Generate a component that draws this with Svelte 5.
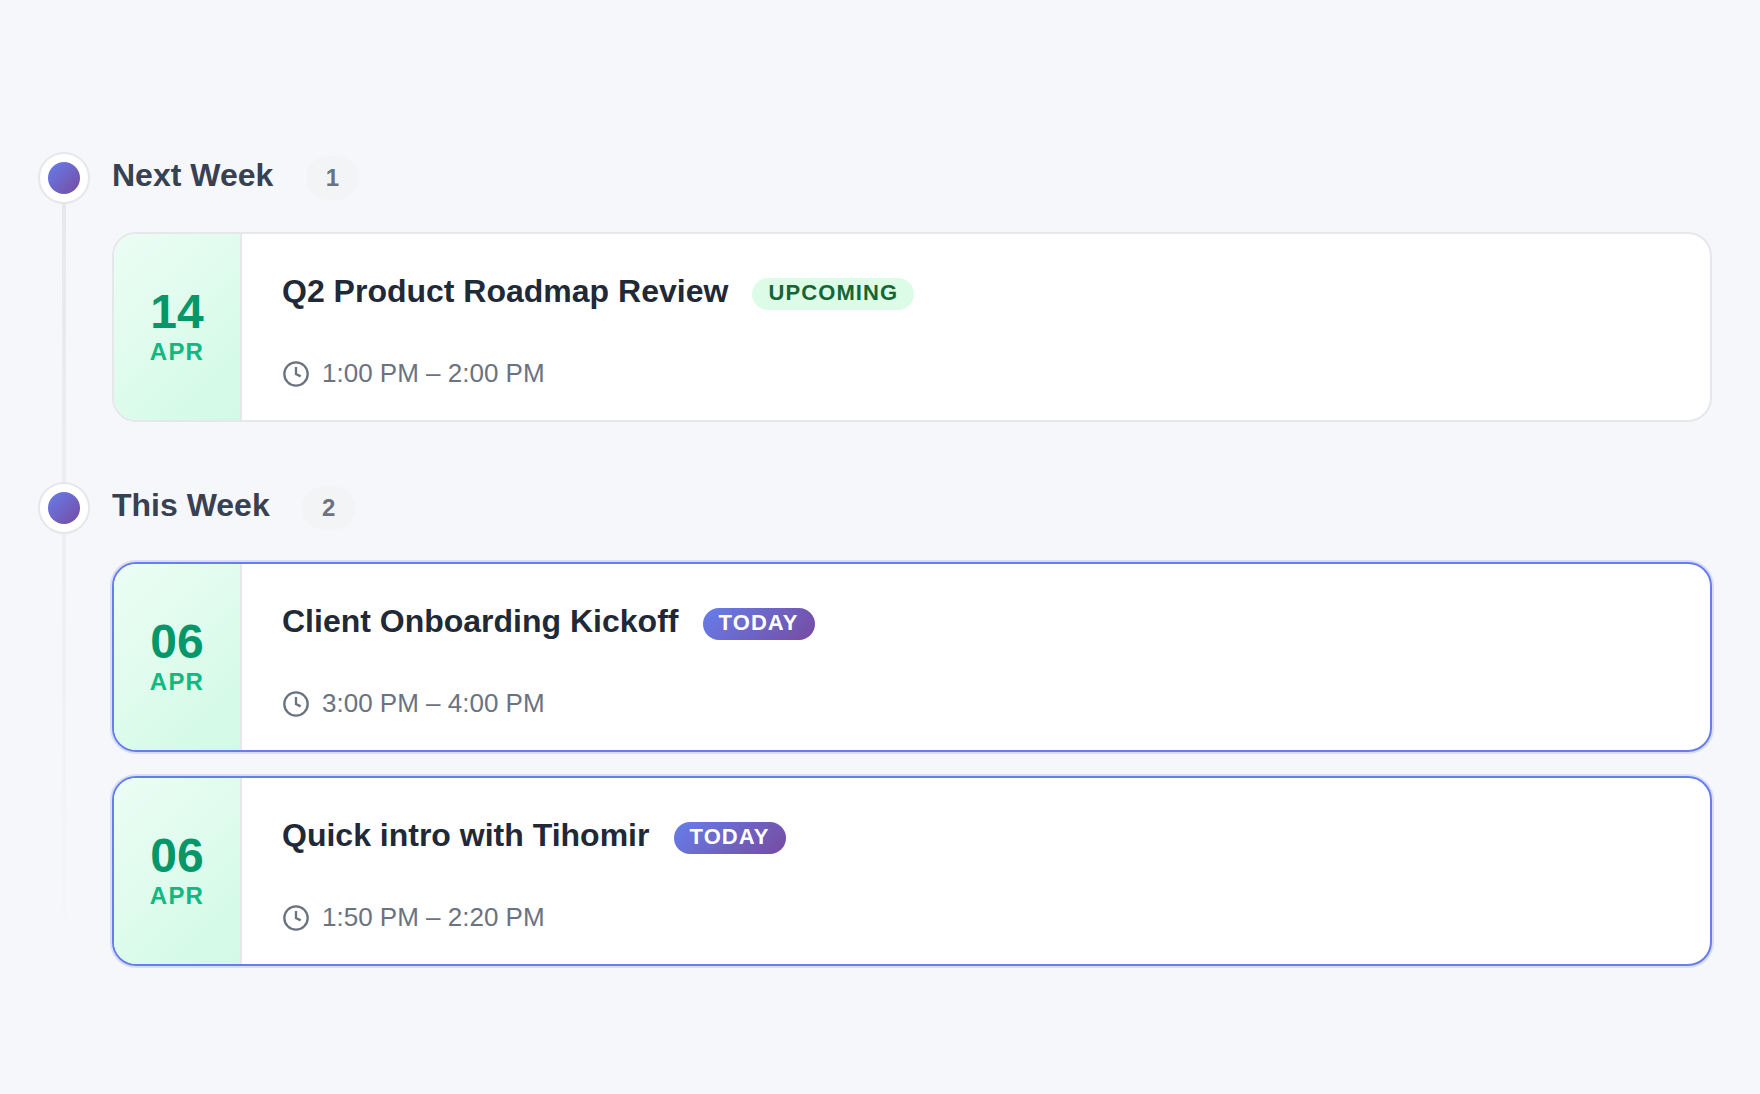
<script>
  const groups = [
    {
      label: "Next Week",
      events: [
        {
          day: "14",
          month: "Apr",
          title: "Q2 Product Roadmap Review",
          time: "1:00 PM – 2:00 PM",
          today: false
        }
      ]
    },
    {
      label: "This Week",
      events: [
        {
          day: "06",
          month: "Apr",
          title: "Client Onboarding Kickoff",
          time: "3:00 PM – 4:00 PM",
          today: true
        },
        {
          day: "06",
          month: "Apr",
          title: "Quick intro with Tihomir",
          time: "1:50 PM – 2:20 PM",
          today: true
        }
      ]
    }
  ];
</script>

<main class="timeline">
  {#each groups as group}
    <section class="group">
      <header class="group-header">
        <span class="marker"></span>
        <h2>{group.label}</h2>
        <span class="count">{group.events.length}</span>
      </header>
      <div class="events">
        {#each group.events as event}
          <article class="card" class:today={event.today}>
            <div class="date">
              <span class="day">{event.day}</span>
              <span class="month">{event.month}</span>
            </div>
            <div class="content">
              <div class="title-row">
                <h3>{event.title}</h3>
                <span class="status">{event.today ? "Today" : "Upcoming"}</span>
              </div>
              <div class="time">
                <svg width="28" height="28" viewBox="0 0 24 24" fill="none" stroke="currentColor" stroke-width="2">
                  <circle cx="12" cy="12" r="10" />
                  <polyline points="12 6 12 12 16 14" />
                </svg>
                <span>{event.time}</span>
              </div>
            </div>
          </article>
        {/each}
      </div>
    </section>
  {/each}
</main>

<style>
  :global(body) {
    margin: 0;
    background: #f5f7fb;
    font-family: "Liberation Sans", Arial, sans-serif;
  }

  .timeline {
    position: relative;
    box-sizing: border-box;
    min-height: 1094px;
    padding: 152px 48px 0 38px;
  }

  /* vertical rail behind the markers */
  .timeline::before {
    content: "";
    position: absolute;
    left: 62px;
    top: 160px;
    width: 4px;
    height: 806px;
    background: linear-gradient(to bottom, #e5e7eb 0%, transparent 100%);
  }

  .group {
    position: relative;
    margin-bottom: 60px;
  }

  .group-header {
    display: flex;
    align-items: center;
    height: 52px;
    margin-bottom: 28px;
  }

  .marker {
    box-sizing: border-box;
    width: 52px;
    height: 52px;
    margin-right: 22px;
    border: 2px solid #e5e7eb;
    border-radius: 50%;
    background: #fff;
    display: flex;
    align-items: center;
    justify-content: center;
  }

  .marker::after {
    content: "";
    width: 32px;
    height: 32px;
    border-radius: 50%;
    background: linear-gradient(135deg, #667eea 0%, #764ba2 100%);
  }

  h2 {
    margin: 0 32.4px 5px 0;
    font-size: 32px;
    font-weight: 700;
    line-height: 37px;
    color: #374151;
  }

  .count {
    padding: 8px 20px;
    border-radius: 24px;
    background: #f3f4f6;
    color: #6b7280;
    font-size: 24px;
    font-weight: 600;
    line-height: 28px;
  }

  .events {
    display: flex;
    flex-direction: column;
    gap: 24px;
    margin-left: 74px;
  }

  .card {
    box-sizing: border-box;
    display: flex;
    height: 190px;
    border: 2px solid #e5e7eb;
    border-radius: 24px;
    background: #fff;
    overflow: hidden;
  }

  .card.today {
    border-color: #667eea;
    box-shadow: 0 0 0 2px rgba(102, 126, 234, 0.2);
  }

  .date {
    box-sizing: border-box;
    width: 128px;
    flex-shrink: 0;
    display: flex;
    flex-direction: column;
    align-items: center;
    justify-content: center;
    border-right: 2px solid #e5e7eb;
    background: linear-gradient(135deg, #ecfdf5 0%, #d1fae5 100%);
  }

  .day {
    font-size: 48px;
    font-weight: 700;
    line-height: 48px;
    color: #059669;
  }

  .month {
    margin-top: 2px;
    font-size: 24px;
    font-weight: 600;
    line-height: 28px;
    letter-spacing: 0.05em;
    text-transform: uppercase;
    color: #10b981;
  }

  .content {
    padding: 40px;
  }

  .title-row {
    display: flex;
    align-items: center;
    gap: 24.1px;
    height: 40px;
    margin-bottom: 44px;
  }

  h3 {
    margin: 0 0 6px;
    font-size: 32px;
    font-weight: 600;
    line-height: 36px;
    color: #1f2937;
  }

  .status {
    padding: 3px 16px 5px;
    border-radius: 20px;
    background: #dcfce7;
    color: #166534;
    font-size: 22px;
    font-weight: 600;
    line-height: 24px;
    letter-spacing: 0.05em;
    text-transform: uppercase;
  }

  .today .status {
    background: linear-gradient(135deg, #667eea 0%, #764ba2 100%);
    color: #fff;
  }

  .time {
    display: flex;
    align-items: center;
    gap: 12px;
    height: 30px;
    font-size: 26px;
    line-height: 30px;
    color: #6b7280;
  }

  .time svg {
    margin-top: 2px;
  }
</style>
